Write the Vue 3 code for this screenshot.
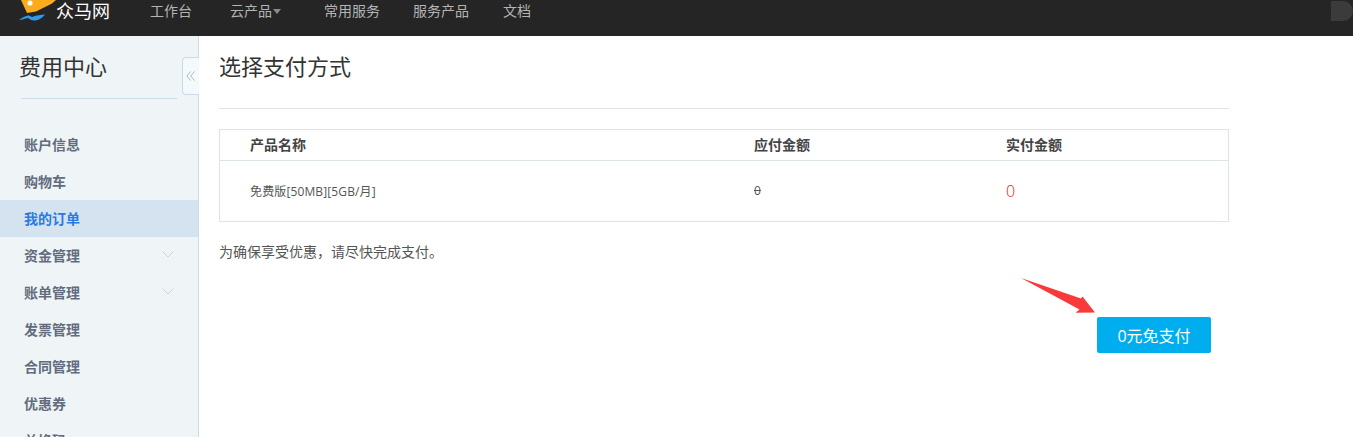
<script setup>
const navItems = [
  { label: '工作台', cls: 'n1' },
  { label: '云产品', cls: 'n2', caret: true },
  { label: '常用服务', cls: 'n3' },
  { label: '服务产品', cls: 'n4' },
  { label: '文档', cls: 'n5' }
]
const menu = [
  { label: '账户信息' },
  { label: '购物车' },
  { label: '我的订单', active: true },
  { label: '资金管理', more: true },
  { label: '账单管理', more: true },
  { label: '发票管理' },
  { label: '合同管理' },
  { label: '优惠券' },
  { label: '兑换码' }
]
</script>

<template>
  <div class="page">
    <header class="topbar">
      <div class="brand">
        <svg class="mark" width="38" height="22" viewBox="0 0 38 22">
          <polygon points="2,0 37,0 33,3.5 17,11.5 8,13" fill="#fbab1d" />
          <circle cx="11" cy="3" r="2.6" fill="#fff" />
          <path d="M0 20 C4 17 7 15.5 10 15.5 L13 17 C18 15 22 15 26 14.5 C23 18 20 20.5 15 20.5 C12 20.5 11 19 9 18 C6 18.5 3 20 0 20 Z" fill="#2f9be8" />
        </svg>
        <span class="brand-name">众马网</span>
      </div>
      <nav class="nav">
        <a v-for="item in navItems" :key="item.label" class="nav-item" :class="item.cls">
          {{ item.label }}<i v-if="item.caret" class="caret"></i>
        </a>
      </nav>
      <div class="avatar"></div>
    </header>

    <div class="body">
      <aside class="side">
        <h2 class="side-title">费用中心</h2>
        <ul class="menu">
          <li v-for="m in menu" :key="m.label" class="menu-item" :class="{ active: m.active }">
            <span>{{ m.label }}</span>
            <svg v-if="m.more" class="chev" width="12" height="7" viewBox="0 0 12 7">
              <path d="M0.5 0.5 L6 6 L11.5 0.5" fill="none" stroke="#cfd3d6" stroke-width="1" />
            </svg>
          </li>
        </ul>
        <button class="collapse" type="button">
          <svg width="9" height="10" viewBox="0 0 9 10">
            <path d="M4.5 0.5 L0.8 5 L4.5 9.5 M8.5 0.5 L4.8 5 L8.5 9.5" fill="none" stroke="#a9b6c2" stroke-width="1" />
          </svg>
        </button>
      </aside>

      <main class="main">
        <h1 class="title">选择支付方式</h1>

        <section class="order">
          <div class="row head">
            <div>产品名称</div>
            <div>应付金额</div>
            <div>实付金额</div>
          </div>
          <div class="row item">
            <div class="name">免费版[50MB][5GB/月]</div>
            <div><s class="old">0</s></div>
            <div class="price">0</div>
          </div>
        </section>

        <p class="note">为确保享受优惠，请尽快完成支付。</p>

        <div class="actions">
          <div class="pay-wrap">
            <svg class="arrow" width="75" height="36" viewBox="0 0 75 36">
              <polygon points="0,0 60,20.5 61.5,18.5 74,34.5 54.5,34.7 58.5,31.5" fill="#f93a3a" />
            </svg>
            <button class="pay" type="button">0元免支付</button>
          </div>
        </div>
      </main>
    </div>
  </div>
</template>

<style>
html, body { margin: 0; height: 100%; overflow: hidden; background: #fff; }
</style>

<style scoped>
.page {
  width: 1353px;
  height: 437px;
  overflow: hidden;
  display: flex;
  flex-direction: column;
  font-family: "Open Sans", "Noto Sans CJK SC", sans-serif;
}
.topbar {
  flex: 0 0 36px;
  height: 36px;
  background: #252525;
  display: flex;
  align-items: flex-start;
  position: relative;
}
.brand {
  display: flex;
  align-items: flex-start;
  margin-left: 19px;
  width: 131px;
}
.mark { display: block; }
.brand-name {
  margin-left: -1px;
  color: #fff;
  font-size: 18px;
  line-height: 22px;
  white-space: nowrap;
}
.nav { display: flex; }
.nav-item {
  color: #b4b4b4;
  font-size: 14px;
  line-height: 22px;
  white-space: nowrap;
  display: flex;
  align-items: center;
}
.n2 { margin-left: 38px; }
.n3 { margin-left: 43px; }
.n4 { margin-left: 33px; }
.n5 { margin-left: 34px; }
.caret {
  width: 0;
  height: 0;
  margin-left: 1px;
  border-left: 4px solid transparent;
  border-right: 4px solid transparent;
  border-top: 5px solid #8b8b8b;
}
.avatar {
  position: absolute;
  right: 0;
  top: 1px;
  width: 22px;
  height: 20px;
  border-radius: 0 10px 10px 0;
  background: #3b3b3b;
}
.body { flex: 1; display: flex; min-height: 0; }
.side {
  position: relative;
  flex: 0 0 198px;
  background: #eff5f6;
  border-right: 1px solid #c9dcec;
}
.side-title {
  margin: 0 0 0 21px;
  padding: 14px 0 15px 0;
  width: 156px;
  height: 33px;
  line-height: 33px;
  font-size: 22px;
  font-weight: 400;
  text-indent: -2px;
  color: #333;
  border-bottom: 1px solid #c9dcec;
  white-space: nowrap;
}
.menu { list-style: none; margin: 27px 0 0; padding: 0; }
.menu-item {
  height: 37px;
  box-sizing: border-box;
  padding: 0 24px 2px;
  display: flex;
  align-items: center;
  justify-content: space-between;
  font-size: 14px;
  font-weight: 700;
  color: #636c7e;
}
.menu-item.active { background: #d5e3f0; color: #2a7ae2; }
.chev { margin-top: -1px; }
.collapse {
  position: absolute;
  top: 21px;
  right: -1px;
  width: 17px;
  height: 38px;
  padding: 0 2px 0 0;
  background: #f4fafc;
  border: 1px solid #c9dcec;
  border-right: 0;
  border-radius: 4px 0 0 4px;
  display: flex;
  align-items: center;
  justify-content: center;
}
.main { flex: 1; padding-left: 20px; min-width: 0; }
.title {
  margin: 0;
  width: 1010px;
  height: 58px;
  padding-top: 14px;
  line-height: 33px;
  font-size: 22px;
  font-weight: 400;
  color: #333;
  border-bottom: 1px solid #dfe3e6;
}
.order {
  margin-top: 20px;
  width: 1010px;
  box-sizing: border-box;
  border: 1px solid #dde4e6;
}
.row {
  display: grid;
  grid-template-columns: 534px 252px 1fr;
  align-items: center;
}
.row > div:first-child { padding-left: 30px; }
.head {
  height: 31px;
  box-sizing: border-box;
  padding-bottom: 2px;
  border-bottom: 1px solid #dde4e6;
  font-size: 14px;
  font-weight: 700;
  color: #444;
}
.item { height: 60px; box-sizing: border-box; padding-bottom: 1px; font-size: 12px; color: #555; }
.name { letter-spacing: 0.13px; }
.old { font-size: 12px; color: #555; }
.price { font-size: 16px; font-weight: 300; color: #f0200a; }
.note {
  margin: 20px 0 0;
  font-size: 14px;
  line-height: 20px;
  color: #555;
}
.actions {
  width: 1010px;
  display: flex;
  justify-content: flex-end;
  padding-right: 18px;
  box-sizing: border-box;
  margin-top: 55px;
}
.pay-wrap { position: relative; }
.arrow { position: absolute; left: -76px; top: -39px; }
.pay {
  display: block;
  width: 114px;
  height: 36px;
  padding: 0;
  border: 0;
  border-radius: 2px;
  background: #00adef;
  color: #fff;
  font-family: inherit;
  font-size: 16px;
}
</style>
